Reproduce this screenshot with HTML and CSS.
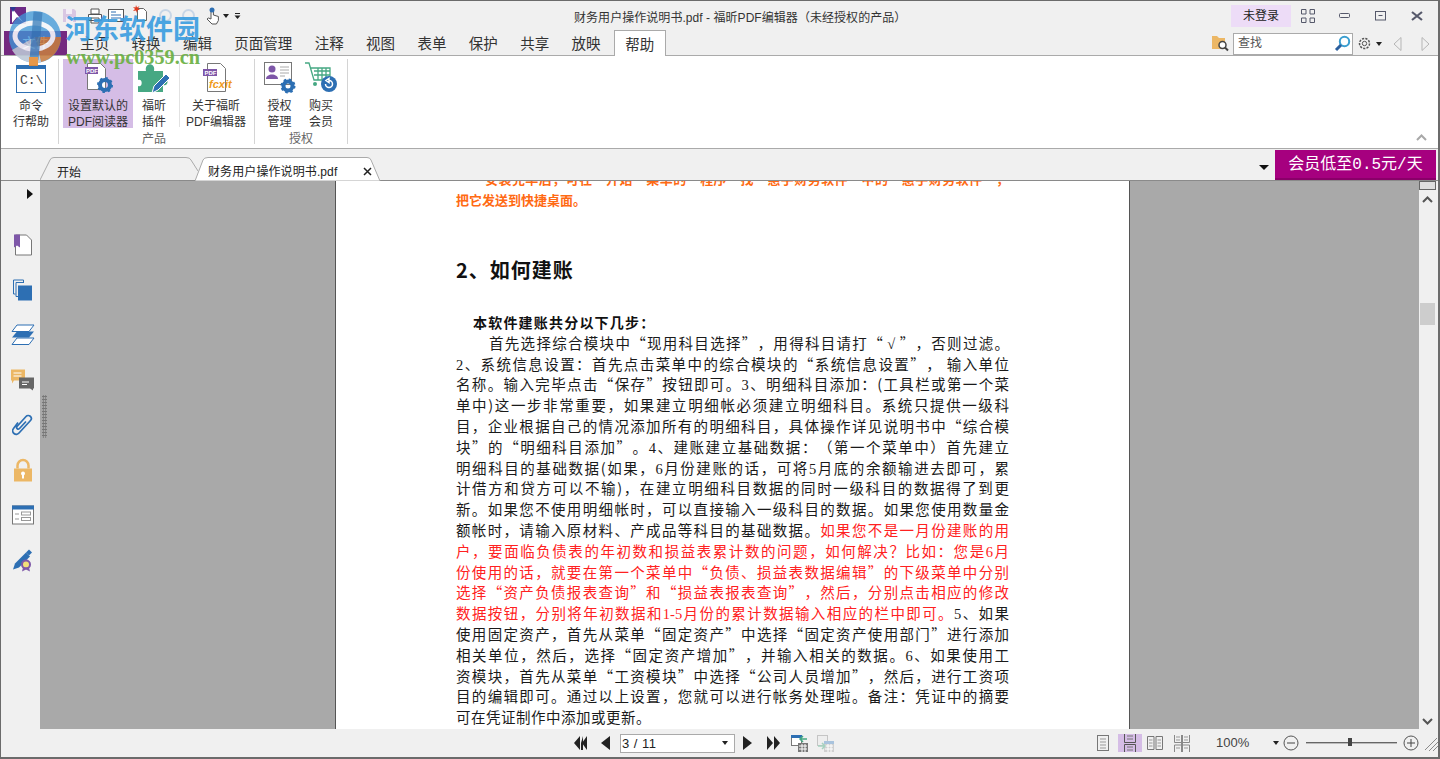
FILE: index.html
```html
<!DOCTYPE html>
<html lang="zh-CN">
<head>
<meta charset="utf-8">
<title>财务用户操作说明书.pdf - 福昕PDF编辑器</title>
<link rel="stylesheet" href="styles.css">
</head>
<body>
<div class="app">
  <header class="titlebar">
    <div class="qat">
      <svg class="q-logo" width="16" height="17" viewBox="0 0 16 17"><rect width="16" height="17" fill="#6d2a86"/><path d="M2 1l11 14-6-5-5 6z" fill="#fff"/><path d="M0 0h6l-3 5z" fill="#2b3a92"/></svg>
      <svg class="q-save" width="15" height="15" viewBox="0 0 15 15"><path d="M1 1h11l2 2v11H1z" fill="#d9c7e3"/><rect x="4" y="1" width="6" height="5" fill="#f3edf6"/><rect x="4" y="9" width="7" height="5" fill="#f3edf6"/></svg>
      <svg class="q-print" width="16" height="16" viewBox="0 0 16 16"><path d="M4 1h8v5H4zM1.500 6.500h13v6h-13zM4 10h8v5H4z" fill="#fff" stroke="#555"/></svg>
      <svg class="q-mail" width="16" height="13" viewBox="0 0 16 13"><rect x=".5" y=".5" width="15" height="12" fill="#fff" stroke="#555"/><path d="M3 3h5M3 6h10M3 9h10" stroke="#2d6fb3"/></svg>
      <svg class="q-new" width="15" height="17" viewBox="0 0 15 17"><path d="M4.500 3.500h6l3 3v9h-9z" fill="#fff" stroke="#666"/><path d="M3 0l1 2.500L6.500 1 5 3.500 7 5 4.500 5 4 8 3 5.500 0 6l2-2L0 2l2.500.5z" fill="#e23a1e"/></svg>
      <svg class="q-undo" width="15" height="15" viewBox="0 0 15 15"><circle cx="7.500" cy="7.500" r="5.500" fill="none" stroke="#c8d6e6" stroke-width="2"/></svg>
      <svg class="q-redo" width="15" height="15" viewBox="0 0 15 15"><circle cx="7.500" cy="7.500" r="5.500" fill="none" stroke="#c8d6e6" stroke-width="2"/></svg>
      <svg class="q-hand" width="15" height="18" viewBox="0 0 15 18"><path d="M5 6V3a1.200 1.200 0 012.400 0v5l5 1.500v4l-2 3.500H6l-5-5 1.500-1L5 12z" fill="#fff" stroke="#555"/><circle cx="6" cy="3" r="2.500" fill="#2d6fb3"/></svg>
      <span class="caret q-c1"></span>
      <svg class="q-more" width="7" height="6" viewBox="0 0 7 6"><path d="M1 .5h5" stroke="#222"/><path d="M.5 2.500h6L3.500 6z" fill="#222"/></svg>
    </div>
    <div class="title">财务用户操作说明书.pdf - 福昕PDF编辑器（未经授权的产品）</div>
    <div class="winctl">
      <button class="login">未登录</button>
      <svg class="w-full" width="14" height="14" viewBox="0 0 14 14"><path d="M.5.5h4.500v4.500H.500zM9 .5h4.500v4.500H9zM.5 9h4.500v4.500H.500zM9 9h4.500v4.500H9z" fill="none" stroke="#55586a"/></svg>
      <svg class="w-min" width="12" height="6" viewBox="0 0 12 6"><rect x=".5" y=".5" width="10" height="4" rx="1" fill="none" stroke="#55586a"/></svg>
      <svg class="w-max" width="12" height="10" viewBox="0 0 12 10"><rect x=".5" y=".5" width="10" height="8.500" fill="none" stroke="#55586a"/><path d="M3.500 4.500h4" stroke="#55586a"/></svg>
      <svg class="w-close" width="12" height="10" viewBox="0 0 12 10"><path d="M1 1l10 8M11 1L1 9" stroke="#55586a" stroke-width="2.200" fill="none"/></svg>
    </div>
  </header>

  <nav class="tabbar">
    <div class="file-tab">文件</div>
    <div class="tab">主页</div>
    <div class="tab">转换</div>
    <div class="tab">编辑</div>
    <div class="tab">页面管理</div>
    <div class="tab">注释</div>
    <div class="tab">视图</div>
    <div class="tab">表单</div>
    <div class="tab">保护</div>
    <div class="tab">共享</div>
    <div class="tab">放映</div>
    <div class="tab tab-active">帮助</div>
    <div class="search-area">
      <svg width="17" height="17" viewBox="0 0 17 17"><path d="M0 1h5l2 2h6v11H0z" fill="#ecb765"/><circle cx="10.500" cy="10" r="3.500" fill="#fff" stroke="#444" stroke-width="1.500"/><path d="M13 12.500l3 3" stroke="#444" stroke-width="2"/></svg>
      <div class="search"><span>查找</span>
        <svg width="17" height="17" viewBox="0 0 17 17"><circle cx="10.500" cy="6.500" r="4.700" fill="#fff" stroke="#3a9ed0" stroke-width="2"/><path d="M7 10l-5 5" stroke="#2b5f9e" stroke-width="3"/></svg>
      </div>
      <svg class="s-gear" width="15" height="15" viewBox="0 0 15 15"><circle cx="7.500" cy="7.500" r="5" fill="none" stroke="#555" stroke-width="1.500" stroke-dasharray="2.200 1.200"/><circle cx="7.500" cy="7.500" r="2.200" fill="none" stroke="#555"/></svg>
      <span class="caret s-caret"></span>
      <svg class="s-prev" width="9" height="14" viewBox="0 0 9 14"><path d="M8 .5v13L1 7z" fill="none" stroke="#b5b5b5"/></svg>
      <svg class="s-next" width="9" height="14" viewBox="0 0 9 14"><path d="M1 .5v13L8 7z" fill="none" stroke="#b5b5b5"/></svg>
    </div>
  </nav>

  <section class="ribbon">
    <div class="rgroup g-cmd">
      <div class="rbtns">
        <div class="rbtn b-cmd">
          <svg width="30" height="28" viewBox="0 0 30 28"><rect x=".5" y=".5" width="29" height="27" fill="#fff" stroke="#2d6fb3"/><rect width="30" height="4" fill="#2d6fb3"/><text x="4" y="19" class="svg-mono">C:\</text></svg>
          <span>命令<br>行帮助</span>
        </div>
      </div>
    </div>
    <div class="rgroup g-prod">
      <div class="rbtns">
        <div class="rbtn b-default">
          <svg width="30" height="32" viewBox="0 0 30 32"><path d="M4.500 1.500h13l5 5v21h-18z" fill="#fff" stroke="#777"/><rect x="2" y="5" width="13" height="7" fill="#7e57a8"/><text x="3" y="11" class="svg-tag">PDF</text><circle cx="22" cy="23" r="5" fill="none" stroke="#2d6fb3" stroke-width="4"/><circle cx="22" cy="23" r="7" fill="none" stroke="#2d6fb3" stroke-width="2" stroke-dasharray="2.500 3"/></svg>
          <span>设置默认的<br>PDF阅读器</span>
        </div>
        <div class="rbtn b-plugin">
          <svg width="34" height="32" viewBox="0 0 34 32"><path d="M1 9h8c-2-9 10-9 8 0h9v8c6-2 6 8 0 6v7H1v-6c5 2 5-8 0-6z" fill="#46a883"/><path d="M15 31l2-7L29 12l4 4-12 12z" fill="#2d6fb3" stroke="#fff"/></svg>
          <span>福昕<br>插件</span>
        </div>
        <div class="rsep"></div>
        <div class="rbtn b-about">
          <svg width="34" height="32" viewBox="0 0 34 32"><path d="M8.500 1.500h13l5 5v23h-18z" fill="#fff" stroke="#777"/><rect x="4" y="7" width="14" height="7" fill="#7e57a8"/><text x="5.500" y="12.700" class="svg-tag">PDF</text><text x="10" y="26" class="svg-fx">fcxit</text></svg>
          <span>关于福昕<br>PDF编辑器</span>
        </div>
      </div>
      <div class="rlabel">产品</div>
    </div>
    <div class="rgroup g-auth">
      <div class="rbtns">
        <div class="rbtn b-lic">
          <svg width="32" height="32" viewBox="0 0 32 32"><rect x=".5" y=".5" width="27" height="22" fill="#fff" stroke="#777"/><circle cx="8" cy="7" r="3.500" fill="#7e57a8"/><path d="M2 17c0-6 12-6 12 0z" fill="#7e57a8"/><path d="M16 5h9M16 8h9M16 11h9M16 14h5" stroke="#aaa"/><circle cx="24" cy="24" r="4.500" fill="none" stroke="#2d6fb3" stroke-width="4"/><circle cx="24" cy="24" r="6.500" fill="none" stroke="#2d6fb3" stroke-width="2" stroke-dasharray="2.500 2.600"/></svg>
          <span>授权<br>管理</span>
        </div>
        <div class="rbtn b-buy">
          <svg width="32" height="32" viewBox="0 0 32 32"><path d="M0 1h4l5 17h16l0-12H5M9 9h16M9 13h16M13 6v12M17 6v12M21 6v12" fill="none" stroke="#46a883" stroke-width="1.300"/><circle cx="10" cy="22" r="2" fill="#46a883"/><circle cx="24" cy="22" r="8" fill="#2d6fb3"/><path d="M20.500 22a3.500 3.500 0 103.500-3.500M24 16.500v4l-3-2z" fill="none" stroke="#fff" stroke-width="1.500"/></svg>
          <span>购买<br>会员</span>
        </div>
      </div>
      <div class="rlabel">授权</div>
    </div>
    <svg class="collapse" width="11" height="7" viewBox="0 0 11 7"><path d="M1 6l4.500-4.500L10 6" fill="none" stroke="#a8a8a8" stroke-width="2"/></svg>
  </section>

  <div class="docstrip">
    <div class="dtab d-start">
      <svg class="dshape" width="158" height="23" viewBox="0 0 158 23"><path d="M0 23L10 3Q11 .5 14 .5H146Q150 .5 151 3L158 14" fill="#f0f0f0" stroke="#aaa"/></svg>
      <span>开始</span>
    </div>
    <div class="dtab d-file">
      <svg class="dshape" width="186" height="24" viewBox="0 0 186 24"><path d="M0 24L8 3Q9 .5 13 .5H172Q175 .5 176 3L185 24z" fill="#fff" stroke="#aaa"/></svg>
      <span>财务用户操作说明书.pdf</span>
      <svg class="dclose" width="9" height="9" viewBox="0 0 9 9"><path d="M1 1l7 7M8 1L1 8" stroke="#222" stroke-width="1.500"/></svg>
    </div>
    <span class="caret strip-caret"></span>
    <div class="vip">会员低至0.5元/天</div>
  </div>

  <main class="workspace">
    <aside class="sidebar">
      <svg class="side-arrow" width="6" height="10" viewBox="0 0 6 10"><path d="M0 0l6 5-6 5z" fill="#111"/></svg>
      <svg width="18" height="21" viewBox="0 0 18 21"><path d="M1.500.5h11l5 5v15h-16z" fill="#fff" stroke="#777"/><path d="M0 0h6v13l-3-2-3 2z" fill="#7e57a8"/></svg>
      <svg width="19" height="21" viewBox="0 0 19 21"><path d="M.5.5h10v3M.5.500v14h2M3 3h8" fill="none" stroke="#2d6fb3"/><rect x="5" y="6" width="14" height="15" fill="#2d6fb3"/><path d="M3 3v14h2" fill="none" stroke="#2d6fb3"/></svg>
      <svg width="24" height="21" viewBox="0 0 24 21"><path d="M6 .5h17l-5 6.500H1z" fill="#fff" stroke="#2d6fb3"/><path d="M6 7h17l-5 6H1z" fill="#2d6fb3"/><path d="M6 13.500h17l-5 6.500H1z" fill="#fff" stroke="#2d6fb3"/></svg>
      <svg width="23" height="21" viewBox="0 0 23 21"><path d="M0 0h14v11H3l-2 3v-3H0z" fill="#ecb765"/><path d="M2.500 3.500h8M2.500 6.500h8" stroke="#fff"/><path d="M8 8h15v11h-1v2l-3-2H8z" fill="#666"/><path d="M11 12.500h7M11 15h5" stroke="#fff"/></svg>
      <svg width="21" height="23" viewBox="0 0 21 23"><path d="M6 9L1.500 15A3.500 3.500 0 007 19.500L18.500 7A3 3 0 0014 3L5 13a1.600 1.600 0 002.500 2l6.500-7" fill="none" stroke="#2d6fb3" stroke-width="1.700"/></svg>
      <svg width="18" height="23" viewBox="0 0 18 23"><path d="M3.500 10V7a5.500 5.500 0 0111 0v3" fill="none" stroke="#ecb765" stroke-width="2.500"/><rect y="10" width="18" height="13" fill="#ecb765"/><circle cx="9" cy="15" r="2" fill="#fff"/><rect x="8" y="15" width="2" height="5" fill="#fff"/></svg>
      <svg width="22" height="19" viewBox="0 0 22 19"><rect x=".5" y=".5" width="21" height="18" fill="#fff" stroke="#777"/><rect width="22" height="4" fill="#2d6fb3"/><path d="M3 8.500h4M3 13.500h4" stroke="#999"/><rect x="9.500" y="6.500" width="9" height="3" fill="none" stroke="#999"/><rect x="9.500" y="12" width="9" height="3" fill="none" stroke="#999"/></svg>
      <svg width="22" height="23" viewBox="0 0 22 23"><path d="M1 21l2-6L14 4l4 4L7 19z" fill="#2d6fb3"/><path d="M14 4l3-3 3 3-3 3z" fill="#2d6fb3"/><circle cx="14" cy="16" r="4" fill="#f2df7a" stroke="#7e57a8" stroke-width="2"/><path d="M11 19l-1 4 4-2 4 2-1-4" fill="#7e57a8"/></svg>
    </aside>
    <div class="canvas">
      <div class="grip"></div>
      <article class="page">
        <div class="orange first">安装完毕后，可在“开始”菜单的“程序”找“惠手财务软件”中的“惠手财务软件”，</div>
        <div class="orange plain">把它发送到快捷桌面。</div>
        <h2 class="heading">2、如何建账</h2>
        <div class="sub">本软件建账共分以下几步：</div>
        <p class="ln ind">首先选择综合模块中“现用科目选择”，用得科目请打“ <span class="n">√</span> ”，否则过滤。</p>
        <p class="ln"><span class="n">2</span>、系统信息设置：首先点击菜单中的综合模块的“系统信息设置”， 输入单位</p>
        <p class="ln">名称。输入完毕点击“保存”按钮即可。<span class="n">3</span>、明细科目添加：(工具栏或第一个菜</p>
        <p class="ln">单中)这一步非常重要，如果建立明细帐必须建立明细科目。系统只提供一级科</p>
        <p class="ln">目，企业根据自己的情况添加所有的明细科目，具体操作详见说明书中“综合模</p>
        <p class="ln">块”的“明细科目添加”。<span class="n">4</span>、建账建立基础数据：（第一个菜单中）首先建立</p>
        <p class="ln">明细科目的基础数据(如果，<span class="n">6</span>月份建账的话，可将<span class="n">5</span>月底的余额输进去即可，累</p>
        <p class="ln">计借方和贷方可以不输)，在建立明细科目数据的同时一级科目的数据得了到更</p>
        <p class="ln">新。如果您不使用明细帐时，可以直接输入一级科目的数据。如果您使用数量金</p>
        <p class="ln">额帐时，请输入原材料、产成品等科目的基础数据。<span class="red">如果您不是一月份建账的用</span></p>
        <p class="ln red">户，要面临负债表的年初数和损益表累计数的问题，如何解决？比如：您是<span class="n">6</span>月</p>
        <p class="ln red">份使用的话，就要在第一个菜单中“负债、损益表数据编辑”的下级菜单中分别</p>
        <p class="ln red">选择“资产负债报表查询”和“损益表报表查询”，然后，分别点击相应的修改</p>
        <p class="ln"><span class="red">数据按钮，分别将年初数据和<span class="n">1-5</span>月份的累计数据输入相应的栏中即可。</span><span class="n">5</span>、如果</p>
        <p class="ln">使用固定资产，首先从菜单“固定资产”中选择“固定资产使用部门”进行添加</p>
        <p class="ln">相关单位，然后，选择“固定资产增加”，并输入相关的数据。<span class="n">6</span>、如果使用工</p>
        <p class="ln">资模块，首先从菜单“工资模块”中选择“公司人员增加”，然后，进行工资项</p>
        <p class="ln">目的编辑即可。通过以上设置，您就可以进行帐务处理啦。备注：凭证中的摘要</p>
        <p class="ln last">可在凭证制作中添加或更新。</p>
      </article>
    </div>
    <div class="vscroll">
      <div class="split-box"></div>
      <svg class="up" width="11" height="7" viewBox="0 0 11 7"><path d="M1 6l4.500-4.500L10 6" fill="none" stroke="#555" stroke-width="2"/></svg>
      <div class="thumb"></div>
      <svg class="down" width="11" height="7" viewBox="0 0 11 7"><path d="M1 1l4.500 4.500L10 1" fill="none" stroke="#555" stroke-width="2"/></svg>
    </div>
  </main>

  <footer class="status">
    <div class="nav">
      <svg width="13" height="14" viewBox="0 0 13 14"><path d="M6 0v14L0 7zM9 0v14H7V7z" fill="#222"/><path d="M13 0v14L8 7z" fill="#222"/></svg>
      <svg class="n-prev" width="9" height="14" viewBox="0 0 9 14"><path d="M9 0v14L0 7z" fill="#222"/></svg>
      <div class="combo"><span>3 / 11</span><i class="caret"></i></div>
      <svg class="n-next" width="9" height="14" viewBox="0 0 9 14"><path d="M0 0v14l9-7z" fill="#222"/></svg>
      <svg class="n-last" width="13" height="14" viewBox="0 0 13 14"><path d="M0 0v14l6-7zM7 0v14l6-7z" fill="#222"/></svg>
      <svg class="n-back" width="17" height="17" viewBox="0 0 17 17"><rect x=".5" y=".5" width="10" height="10" fill="#fff" stroke="#777"/><rect width="11" height="3" fill="#2d6fb3"/><rect x="7" y="8" width="10" height="9" fill="#777"/><path d="M8 11h8M8 14h8M11 9v8M14 9v8" stroke="#fff"/><path d="M16 4H9M12 1L9 4l3 3" fill="none" stroke="#46a883" stroke-width="1.500"/></svg>
      <svg class="n-fwd" width="17" height="17" viewBox="0 0 17 17"><rect x=".5" y=".5" width="10" height="10" fill="#eee" stroke="#c5c5c5"/><rect x="7" y="6" width="10" height="11" fill="#d0d0d0"/><rect x="7" y="6" width="10" height="3" fill="#a9c3dd"/><path d="M8 11h8M8 14h8M11 9v8M14 9v8" stroke="#fff"/><path d="M1 11h7M5 8l3 3-3 3" fill="none" stroke="#a5d1bf" stroke-width="1.500"/></svg>
    </div>
    <div class="views">
      <svg width="14" height="16" viewBox="0 0 14 16"><rect x="1.500" y=".5" width="11" height="15" fill="none" stroke="#777"/><path d="M4 4h6M4 7h6M4 10h6M4 13h6" stroke="#999"/></svg>
      <div class="view-on"><svg width="14" height="18" viewBox="0 0 14 18"><path d="M1.500 0v8.500h11V0M1.500 18v-7.500h11V18" fill="none" stroke="#555"/><path d="M4 2h6M4 5h6M4 13h6M4 16h6" stroke="#777"/></svg></div>
      <svg width="16" height="14" viewBox="0 0 16 14"><path d="M.5.500h6.500v13H.500zM9 .5h6.500v13H9z" fill="none" stroke="#777"/><path d="M2 4h3.500M2 7h3.500M2 10h3.500M10.500 4H14M10.500 7H14M10.500 10H14" stroke="#999"/></svg>
      <svg width="16" height="17" viewBox="0 0 16 17"><path d="M.5 0v7.500H7M15.500 0v7.500H9M.5 17V10H7M15.500 17V10H9M7.500 0v17M8.500 0v17" fill="none" stroke="#888"/><path d="M2 2h4M2 5h4M10 2h4M10 5h4M2 13h4M10 13h4" stroke="#999"/></svg>
    </div>
    <div class="zoomval">100%</div>
    <span class="caret z-caret"></span>
    <svg class="z-minus" width="16" height="16" viewBox="0 0 16 16"><circle cx="8" cy="8" r="7" fill="none" stroke="#555"/><path d="M4 8h8" stroke="#444"/></svg>
    <div class="slider"><i></i></div>
    <svg class="z-plus" width="16" height="16" viewBox="0 0 16 16"><circle cx="8" cy="8" r="7" fill="none" stroke="#555"/><path d="M4 8h8M8 4v8" stroke="#444"/></svg>
    <svg class="z-grip" width="13" height="13" viewBox="0 0 13 13"><path d="M0 12L12 0M4 13L13 4M8 13l5-5" stroke="#8a8a8a"/></svg>
  </footer>

  <div class="wm" aria-hidden="true">
    <svg class="wm-logo" width="62" height="56" viewBox="0 0 62 56"><circle cx="30" cy="27" r="26" fill="#3f98d8" opacity=".85"/><path d="M30 27L56 27A26 26 0 0136 52z" fill="#d9782b" opacity=".85"/><path d="M30 27L36 52A26 26 0 017 40z" fill="#cfcfd6" opacity=".85"/><ellipse cx="29" cy="26" rx="19" ry="13" fill="none" stroke="#f5f7fb" stroke-width="5"/><path d="M33 2l-4 48" stroke="#2f78b8" stroke-width="9" opacity=".8"/><rect x="24" y="47" width="9" height="9" fill="#e58d36"/></svg>
    <div class="wm-cn">河东软件园</div>
    <div class="wm-url">www.pc0359.cn</div>
  </div>
</div>
</body>
</html>
```
FILE: styles.css
```css
* { box-sizing: border-box; }
html, body { margin: 0; height: 100%; overflow: hidden; }
body { font: 12px/1.2 "Liberation Sans", "Noto Sans CJK SC", sans-serif; color: #222; background: #f0f0f0; }
svg { display: block; flex: none; }

.app { position: relative; display: flex; flex-direction: column; width: 1440px; height: 759px; border: solid #6b6b6b; border-width: 1px 2px 2px 1px; }
.caret { display: block; flex: none; width: 0; height: 0; border: solid transparent; border-width: 4px 3.500px 0; border-top-color: #222; }

/* title bar */
.titlebar { position: relative; display: flex; align-items: center; height: 29px; flex: none; }
.qat { display: flex; align-items: center; padding-left: 9px; }
.q-save { margin-left: 36px; }
.q-print { margin-left: 10px; }
.q-mail { margin-left: 5px; }
.q-new { margin-left: 9px; margin-top: -4px; }
.q-undo { margin-left: 10px; }
.q-redo { margin-left: 8px; }
.q-hand { margin-left: 10px; }
.q-c1 { margin-left: 2px; }
.q-more { margin-left: 5px; }
.title { position: absolute; left: 573px; top: 10px; font-size: 12px; white-space: nowrap; color: #333; letter-spacing: .05px; }
.winctl { margin-left: auto; display: flex; align-items: center; }
.login { width: 60px; height: 22px; border: 0; padding: 0; background: #eddcf7; font: inherit; color: #222; margin-top: 1px; }
.w-full { margin-left: 10px; }
.w-min { margin-left: 24px; }
.w-max { margin-left: 24px; }
.w-close { margin-left: 24px; margin-right: 15px; }

/* ribbon tabs */
.tabbar { display: flex; align-items: flex-end; height: 26px; flex: none; border-bottom: 1px solid #aaa; padding-left: 3px; }
.file-tab { width: 63px; height: 24px; margin-right: 2px; background: #742a80; color: #fff; text-align: center; line-height: 24px; font-size: 13px; }
.tab { padding: 0 11.200px; height: 24px; line-height: 26px; font-size: 14.500px; color: #333; white-space: nowrap; }
.tab-active { height: 26px; width: 52px; margin: 0 0 -1px 2px; padding: 0; text-align: center; line-height: 29px; background: #fff; border: 1px solid #aaa; border-bottom: 0; }
.search-area { margin-left: auto; align-self: stretch; display: flex; align-items: center; padding: 2px 8px 0 0; }
.search { display: flex; align-items: center; justify-content: space-between; width: 120px; height: 22px; margin-left: 4px; padding: 0 1px 0 4px; background: #fff; border: 1px solid #aaa; color: #555; font-size: 12px; }
.s-gear { margin-left: 4px; }
.s-caret { margin-left: 4px; }
.s-prev { margin-left: 11px; }
.s-next { margin-left: 19px; }

/* ribbon */
.ribbon { position: relative; display: flex; height: 93px; flex: none; background: #fff; border-bottom: 1px solid #aaa; padding: 3px 0 0 3px; }
.rgroup { position: relative; display: flex; flex-direction: column; height: 85px; border-right: 1px solid #d4d4d4; }
.g-cmd { width: 55px; }
.g-prod { width: 196px; }
.g-auth { width: 93px; }
.rbtns { display: flex; align-items: flex-start; height: 69px; }
.rbtn { display: flex; flex-direction: column; align-items: center; text-align: center; height: 69px; line-height: 16px; color: #333; font-size: 12px; }
.rbtn svg { height: 32px; margin-top: 3px; margin-bottom: 4px; }
.rbtn span { display: block; white-space: nowrap; }
.b-cmd { width: 54px; padding-top: 3px; }
.b-cmd svg { height: 28px; margin-bottom: 5px; margin-top: 3px; }
.b-default { width: 70px; margin-left: 4px; background: #d5bde6; }
.b-plugin { width: 42px; }
.rsep { width: 1px; height: 64px; margin: 4px 4px 0; background: #e2e2e2; }
.b-about { width: 70px; margin-left: -3px; }
.b-lic { width: 35px; margin-left: 7px; }
.b-buy { width: 38px; margin-left: 5px; }
.rlabel { text-align: center; color: #666; line-height: 16px; margin-top: 3px; }
.g-prod .rlabel { padding-right: 5px; }
.collapse { position: absolute; right: 11px; top: 78px; }

/* document tabs */
.docstrip { display: flex; align-items: flex-end; height: 32px; flex: none; background: #f0f0f0; border-bottom: 1px solid #8a8a8a; padding: 0 2px 0 39px; }
.dtab { position: relative; height: 23px; line-height: 32px; flex: none; }
.dshape { position: absolute; left: 0; top: 0; }
.dtab span { position: relative; }
.d-start { width: 155px; padding-left: 17px; }
.d-file { width: 186px; height: 24px; margin-bottom: -1px; padding-left: 13px; display: flex; align-items: center; line-height: 16px; letter-spacing: .1px; }
.d-file span { padding-top: 5px; }
.dclose { position: relative; margin-left: 26px; margin-top: 4px; }
.strip-caret { margin: 0 0 10px auto; border-width: 5px 5px 0; border-top-color: #111; }
.vip { width: 161px; height: 30px; margin: 0 0 0 6px; background: #a6007f; border-bottom: 2px solid #8a0069; color: #fff; font: 16px/31px "Liberation Mono", "Noto Sans CJK SC", monospace; text-align: center; white-space: nowrap; }

/* workspace */
.workspace { display: flex; flex: 1; min-height: 0; background: #a9a9a9; }
.sidebar { display: flex; flex-direction: column; align-items: center; width: 39px; flex: none; background: #f0f0f0; padding-left: 4px; }
.sidebar svg { height: 24px; margin-top: 21px; }
.sidebar .side-arrow { align-self: flex-end; height: 10px; margin: 8px 7px 19px 0; }
.sidebar .side-arrow + svg { margin-top: 14.500px; }
.canvas { position: relative; flex: 1; min-width: 0; overflow: hidden; }
.grip { position: absolute; left: 2px; top: 214px; width: 5px; height: 43px; background: radial-gradient(circle, #777 1px, transparent 1.100px) 0 0/2.500px 3px; }
.page { width: 795px; height: 100%; margin-left: 295px; padding-left: 120px; background: #fff; border: solid #555; border-width: 0 1px; overflow: hidden; font-family: "Noto Sans CJK SC", sans-serif; text-spacing-trim: space-all; }
.orange { width: 553px; color: #ff6a13; font: 700 13px/20.800px "Noto Sans CJK SC", sans-serif; white-space: nowrap; }
.first { margin-top: -12px; padding-left: 29px; text-align-last: justify; }
.heading { margin: 44px 0 0; font: 700 20px/30px "Noto Sans CJK SC", sans-serif; letter-spacing: 1px; color: #111; }
.sub { margin: 27.500px 0 0 17px; font: 700 14px/20.800px "Noto Sans CJK SC", sans-serif; letter-spacing: 1.200px; color: #111; }
.ln { width: 553px; margin: 0; height: 20.800px; font-size: 14.500px; line-height: 20.800px; color: #1a1a1a; text-align: justify; text-align-last: justify; white-space: nowrap; overflow: hidden; }
.n { font-family: "Liberation Serif", serif; }
.ind { padding-left: 33px; }
.last { text-align-last: left; letter-spacing: .5px; }
.red { color: #ff2121; }
.vscroll { position: relative; display: flex; flex-direction: column; align-items: center; width: 19px; flex: none; padding-right: 2px; background: #f0f0f0; }
.split-box { width: 17px; height: 9px; background: #dedede; border: 1px solid #666; }
.up { margin-top: 6px; }
.thumb { width: 15px; height: 22px; margin-top: 100px; background: #cdcdcd; }
.down { margin-top: auto; margin-bottom: 4px; }

/* status */
.status { display: flex; align-items: center; height: 28px; flex: none; background: #f0f0f0; }
.nav { display: flex; align-items: center; padding-left: 573px; }
.n-prev { margin-left: 14px; }
.combo { display: flex; align-items: center; justify-content: space-between; width: 115px; height: 19px; margin-left: 10px; padding: 0 6px 0 1px; background: #fff; border: 1px solid #aaa; font: 13px "Liberation Sans", sans-serif; letter-spacing: .5px; color: #222; }
.n-next { margin-left: 8px; }
.n-last { margin-left: 15px; }
.n-back { margin-left: 11px; }
.n-fwd { margin-left: 9px; }
.views { display: flex; align-items: center; margin-left: 262px; }
.view-on { display: flex; justify-content: center; width: 24px; height: 18px; margin: 0 5px 0 8px; background: #d5bde6; }
.views > svg:last-child { margin-left: 11px; }
.zoomval { width: 32px; margin-left: 26px; font-size: 13px; color: #444; white-space: nowrap; }
.z-caret { margin-left: 25px; }
.z-minus { margin-left: 4px; }
.slider { position: relative; width: 91px; height: 2px; margin-left: 7px; background: #666; border-bottom: 1px solid #bbb; }
.slider i { position: absolute; left: 42px; top: -4px; width: 4px; height: 8px; background: #444; }
.z-plus { margin-left: 6px; }
.z-grip { margin-left: 6px; margin-top: 3px; }

/* watermark */
.wm { position: absolute; left: 0; top: 0; width: 210px; height: 70px; pointer-events: none; }
.wm-logo { position: absolute; left: 4px; top: 9px; opacity: .9; }
.wm-cn { position: absolute; left: 64px; top: 9px; color: #3d9ee0; font: 700 27px/36px "Noto Sans CJK SC", sans-serif; opacity: .92; white-space: nowrap; }
.wm-url { position: absolute; left: 65px; top: 46px; color: #6bb043; font: 700 20.300px/20px "Liberation Serif", serif; opacity: .92; white-space: nowrap; }

/* svg text */
.svg-mono { font: 13px "Liberation Mono", monospace; fill: #444; }
.svg-tag { font: 700 6px "Liberation Sans", sans-serif; fill: #fff; }
.svg-fx { font: italic 700 11px "Liberation Sans", sans-serif; fill: #f09a1a; }
```
